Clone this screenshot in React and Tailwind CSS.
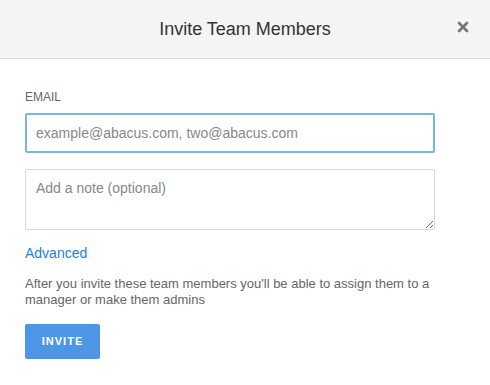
import { X } from "lucide-react";

export default function App() {
  return (
    <div className="h-[385px] w-[490px] bg-white font-['Liberation_Sans',Arial,sans-serif]">
      <header className="relative flex h-[59px] items-center justify-center border-b border-[#dcdcdc] bg-[#f4f4f4]">
        <h1 className="text-[18px] text-[#333]">Invite Team Members</h1>
        <button className="absolute right-[19px] top-[19px] text-[#777]">
          <X className="h-[16px] w-[16px]" strokeWidth={4} />
        </button>
      </header>

      <div className="px-[25px] pt-[31px]">
        <label className="block text-[12px] leading-[14px] text-[#666]">EMAIL</label>
        <input
          className="mt-[9px] block h-[40px] w-[410px] rounded-[2px] border-2 border-[#7ab4ec] px-[9px] text-[14px] text-[#333] outline-none placeholder:text-[#888]"
          placeholder="example@abacus.com, two@abacus.com"
        />
        <textarea
          className="mt-[16px] block h-[61px] w-[410px] resize-y rounded-[2px] border border-[#d9d9d9] px-[10px] py-[10px] text-[14px] leading-[17px] text-[#333] outline-none placeholder:text-[#888]"
          placeholder="Add a note (optional)"
        />
        <a href="#" className="mt-[15px] block text-[14px] leading-[17px] text-[#1a7fe0]">
          Advanced
        </a>
        <p className="mt-[14px] text-[13px] leading-[16px] text-[#666]">
          After you invite these team members you'll be able to assign them to a manager or make them admins
        </p>
        <button className="mt-[16px] h-[35px] w-[75px] rounded-[2px] bg-[#4d96e6] text-[11px] font-bold tracking-[1px] text-white">
          INVITE
        </button>
      </div>
    </div>
  );
}
